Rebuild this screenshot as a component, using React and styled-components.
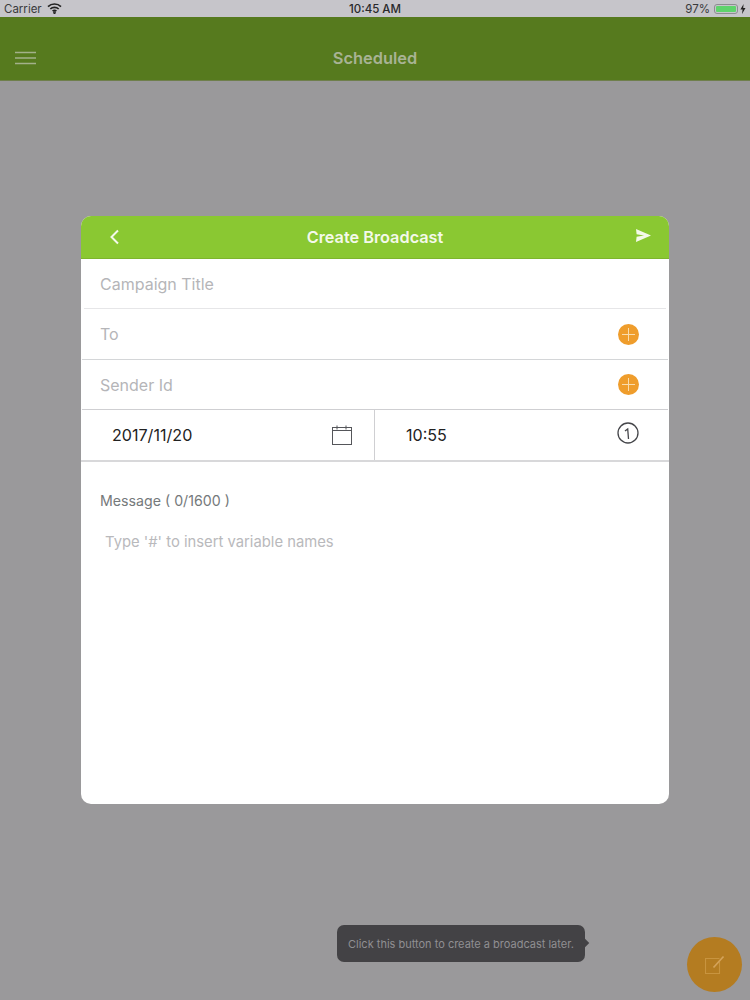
import styled, { createGlobalStyle } from 'styled-components'

const GlobalStyle = createGlobalStyle`
  html, body {
    margin: 0;
    padding: 0;
    background: #9a999b;
  }
  * {
    box-sizing: border-box;
  }
`

const Screen = styled.div`
  position: relative;
  width: 750px;
  height: 1000px;
  overflow: hidden;
  background: #9a999b;
  font-family: Inter, "Liberation Sans", sans-serif;
`

const StatusBar = styled.div`
  height: 17px;
  padding: 0 4px;
  display: grid;
  grid-template-columns: 1fr auto 1fr;
  align-items: center;
  background: #c6c5ca;
  color: #3a3a3c;
  font-size: 11.5px;
`

const StatusLeft = styled.div`
  display: flex;
  align-items: center;
  gap: 5px;
`

const StatusRight = styled.div`
  display: flex;
  align-items: center;
  justify-content: flex-end;
  gap: 2px;
`

const Clock = styled.div`
  font-weight: 500;
  color: #29292b;
`

const Battery = styled.div`
  width: 24px;
  height: 10px;
  margin-left: 2px;
  padding: 1px;
  border: 1px solid #8d8d90;
  border-radius: 3px;
  &::before {
    content: '';
    display: block;
    height: 100%;
    border-radius: 1px;
    background: #5fd36c;
  }
`

const NavBar = styled.header`
  height: 64px;
  padding: 18px 15px 0;
  display: grid;
  grid-template-columns: 1fr auto 1fr;
  align-items: center;
  background: #567a1e;
  border-bottom: 1px solid #6f7f4c;
`

const NavTitle = styled.div`
  color: #a8b394;
  font-size: 16.4px;
  font-weight: 600;
`

const Body = styled.main`
  display: flex;
  justify-content: center;
  padding-top: 135px;
`

const Modal = styled.section`
  width: 588px;
  height: 588px;
  border-radius: 10px;
  overflow: hidden;
  background: #fff;
`

const ModalHeader = styled.div`
  height: 43px;
  padding: 0 18px;
  display: grid;
  grid-template-columns: 1fr auto 1fr;
  align-items: center;
  background: #8ac832;
  border-bottom: 1px solid #7db52d;
`

const BackSlot = styled.div`
  display: flex;
  padding-left: 10px;
`

const ModalTitle = styled.h2`
  margin: 0;
  color: #f4f9ea;
  font-size: 16.3px;
  font-weight: 600;
`

const SendSlot = styled.div`
  display: flex;
  justify-content: flex-end;
  padding-bottom: 3px;
`

const Field = styled.div`
  height: ${p => p.$height}px;
  margin: 0 ${p => p.$inset}px;
  padding: 0 ${p => 30 - p.$inset}px 0 ${p => 19 - p.$inset}px;
  display: flex;
  align-items: center;
  justify-content: space-between;
  border-bottom: 1px solid ${p => p.$line};
  color: #b5b5b8;
  font-size: 16px;
`

const AddButton = styled.span`
  width: 21px;
  height: 21px;
  border-radius: 50%;
  display: flex;
  align-items: center;
  justify-content: center;
  background: #ef9d2c;
`

const DateRow = styled.div`
  height: 52px;
  display: grid;
  grid-template-columns: 294px 1fr;
  border-bottom: 2px solid #d8d8da;
`

const DateCell = styled.div`
  padding: 0 ${p => p.$right}px 0 ${p => p.$left}px;
  display: flex;
  align-items: center;
  justify-content: space-between;
  color: #222;
  font-size: 16.1px;
  border-right: ${p => (p.$divider ? '1px solid #cfcfd2' : 'none')};
`

const MessageLabel = styled.div`
  margin: 30px 0 0 19px;
  color: #75797b;
  font-size: 14.2px;
`

const Placeholder = styled.div`
  margin: 24px 0 0 24px;
  color: #b9b9bc;
  font-size: 14.8px;
`

const Tooltip = styled.div`
  position: absolute;
  left: 337px;
  top: 925px;
  width: 248px;
  height: 37px;
  padding-left: 11px;
  display: flex;
  align-items: center;
  border-radius: 7px;
  background: #434245;
  color: #908f92;
  font-size: 11px;
  white-space: nowrap;
  &::after {
    content: '';
    position: absolute;
    right: -3px;
    top: 15px;
    width: 6px;
    height: 6px;
    background: #434245;
    transform: rotate(45deg);
  }
`

const Fab = styled.button`
  position: absolute;
  left: 687px;
  top: 937px;
  width: 55px;
  height: 55px;
  padding: 0;
  border: none;
  border-radius: 50%;
  display: flex;
  align-items: center;
  justify-content: center;
  background: #b47c21;
`

const ClockSvg = styled.svg`
  margin-bottom: 5px;
`

const Wifi = () => (
  <svg width="15" height="11" viewBox="0 0 15 11" fill="none" stroke="#222" strokeWidth="1.7">
    <path d="M1 3.6a9.4 9.4 0 0 1 13 0" />
    <path d="M3.3 6a6 6 0 0 1 8.4 0" />
    <path d="M5.6 8.2a2.8 2.8 0 0 1 3.8 0" />
    <circle cx="7.5" cy="9.7" r="0.5" fill="#222" />
  </svg>
)

const Bolt = () => (
  <svg width="6" height="10" viewBox="0 0 6 10">
    <path d="M3.6 0 0.4 5.6h2.2L2 10l3.5-6H3.2z" fill="#222" />
  </svg>
)

const Menu = () => (
  <svg width="21" height="14" viewBox="0 0 21 14" stroke="#a3b18a" strokeWidth="1.4">
    <path d="M0 1.5h21M0 7h21M0 12.5h21" />
  </svg>
)

const Back = () => (
  <svg width="11" height="16" viewBox="0 0 11 16" fill="none" stroke="#f4f9ea" strokeWidth="2">
    <path d="M9 1.5 2.5 8 9 14.5" />
  </svg>
)

const Send = () => (
  <svg width="15" height="13" viewBox="0 0 15 13">
    <path d="M0 0 15 6.5 0 13l.6-5.2 7.4-1.3-7.4-1.3z" fill="#f4f9ea" />
  </svg>
)

const Plus = () => (
  <svg width="13" height="13" viewBox="0 0 13 13" stroke="#f9dcae" strokeWidth="1">
    <path d="M6.5 0v13M0 6.5h13" />
  </svg>
)

const CalendarIcon = () => (
  <svg width="20" height="20" viewBox="0 0 20 20" fill="none" stroke="#55565a" strokeWidth="1">
    <rect x="0.5" y="2.5" width="19" height="17" />
    <path d="M0.5 5.5h19M5 0.5v4M14 0.5v4" />
  </svg>
)

const ClockIcon = () => (
  <ClockSvg width="22" height="22" viewBox="0 0 22 22" fill="none" stroke="#45464a" strokeWidth="1.3">
    <circle cx="11" cy="11" r="10" />
    <path d="M8 9 10.7 7l.8 10" />
  </ClockSvg>
)

const ComposeIcon = () => (
  <svg width="20" height="20" viewBox="0 0 20 20" fill="none">
    <path d="M14.5 3.5H.5v15h14V7" stroke="#c8943f" strokeWidth="1.1" />
    <path d="M8.5 12.5 18.5 1.5" stroke="#d4a35a" strokeWidth="1.7" />
  </svg>
)

export default function App () {
  return (
    <Screen>
      <GlobalStyle />
      <StatusBar>
        <StatusLeft>Carrier <Wifi /></StatusLeft>
        <Clock>10:45 AM</Clock>
        <StatusRight>97% <Battery /> <Bolt /></StatusRight>
      </StatusBar>
      <NavBar>
        <Menu />
        <NavTitle>Scheduled</NavTitle>
      </NavBar>
      <Body>
        <Modal>
          <ModalHeader>
            <BackSlot><Back /></BackSlot>
            <ModalTitle>Create Broadcast</ModalTitle>
            <SendSlot><Send /></SendSlot>
          </ModalHeader>
          <Field $height={50} $inset={3} $line='#e6e6e8'>Campaign Title</Field>
          <Field $height={51} $inset={1} $line='#d4d6d8'>To <AddButton><Plus /></AddButton></Field>
          <Field $height={50} $inset={1} $line='#cfcfd2'>Sender Id <AddButton><Plus /></AddButton></Field>
          <DateRow>
            <DateCell $left={31} $right={22} $divider>2017/11/20 <CalendarIcon /></DateCell>
            <DateCell $left={31} $right={30}>10:55 <ClockIcon /></DateCell>
          </DateRow>
          <MessageLabel>Message ( 0/1600 )</MessageLabel>
          <Placeholder>Type '#' to insert variable names</Placeholder>
        </Modal>
      </Body>
      <Tooltip>Click this button to create a broadcast later.</Tooltip>
      <Fab aria-label='Create broadcast later'><ComposeIcon /></Fab>
    </Screen>
  )
}
